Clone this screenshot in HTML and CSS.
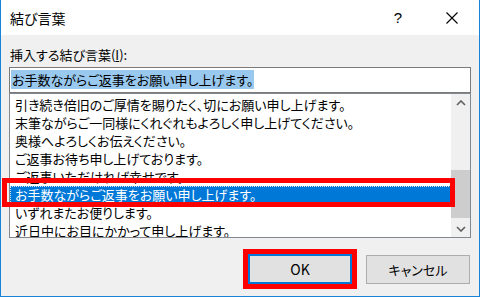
FILE: index.html
```html
<!DOCTYPE html>
<html>
	<head>
		<meta charset="utf-8">
		<title>結び言葉</title>
		<link rel="stylesheet" href="styles.css">
	</head>
	<body>
		<div class="dialog">
			<div class="titlebar">
				<span class="title">結び言葉</span>
				<span class="help">?</span>
				<span class="close">
					<svg width="12" height="12" viewBox="0 0 12 12">
						<path d="M0.5 0.5 L11.5 11.5 M11.5 0.5 L0.5 11.5" stroke="#000" stroke-width="1.1" fill="none"/>
					</svg>
				</span>
			</div>
			<div class="content">
				<div class="label">挿入する結び言葉(<u>I</u>):</div>
				<div class="textbox"><span class="sel">お手数ながらご返事をお願い申し上げます。</span></div>
				<div class="listbox">
					<ul class="items">
						<li>引き続き倍旧のご厚情を賜りたく、切にお願い申し上げます。</li>
						<li>末筆ながらご一同様にくれぐれもよろしく申し上げてください。</li>
						<li>奥様へよろしくお伝えください。</li>
						<li>ご返事お待ち申し上げております。</li>
						<li>ご返事いただければ幸せです。</li>
						<li class="selected">お手数ながらご返事をお願い申し上げます。</li>
						<li>いずれまたお便りします。</li>
						<li>近日中にお目にかかって申し上げます。</li>
					</ul>
					<div class="scrollbar">
						<div class="arrow">
							<svg width="10" height="6" viewBox="0 0 10 6">
								<path d="M1 5 L5 1 L9 5" stroke="#606060" stroke-width="1.6" fill="none"/>
							</svg>
						</div>
						<div class="track">
							<div class="thumb"></div>
						</div>
						<div class="arrow">
							<svg width="10" height="6" viewBox="0 0 10 6">
								<path d="M1 1 L5 5 L9 1" stroke="#606060" stroke-width="1.6" fill="none"/>
							</svg>
						</div>
					</div>
				</div>
				<div class="buttons">
					<span class="button default">OK</span>
					<span class="button">キャンセル</span>
				</div>
			</div>
			<div class="mark"></div>
		</div>
	</body>
</html>
```

FILE: styles.css
```css
html, body {
	margin: 0;
	width: 480px;
	height: 297px;
	overflow: hidden;
}
body {
	font-family: "Noto Sans CJK JP", "Liberation Sans", sans-serif;
	font-size: 13px;
	font-feature-settings: "palt";
	color: #000;
	background-color: #f0f0f0;
}
.dialog {
	position: relative;
	box-sizing: border-box;
	height: 297px;
	border-left: solid 1px #1883d7;
	border-right: solid 1px #1883d7;
	border-bottom: solid 1px #1883d7;
}
.titlebar {
	display: flex;
	align-items: center;
	height: 35px;
	background-color: #fff;
}
.title {
	flex: 1;
	padding-left: 9px;
	font-size: 14px;
}
.help, .close {
	display: flex;
	justify-content: center;
	align-items: center;
	width: 46px;
}
.help {
	font-family: "Liberation Sans", sans-serif;
	font-size: 15px;
	margin-right: 8px;
}
.close {
	margin-right: 4px;
}
.content {
	padding: 0 8px;
}
.label {
	margin-top: 11px;
	line-height: 18px;
	padding-left: 1px;
}
.textbox {
	box-sizing: border-box;
	height: 26px;
	margin-top: 3px;
	padding: 2px 1px;
	background-color: #fff;
	border: solid 1px #7a7a7a;
	line-height: 19px;
}
.sel {
	display: inline-block;
	background-color: #99c9ef;
	padding: 0 1px;
}
.listbox {
	display: flex;
	box-sizing: border-box;
	height: 145px;
	background-color: #fff;
	border: solid 1px #828790;
}
.items {
	flex: 1;
	margin: 0;
	padding: 2px 0 0 0;
	list-style: none;
	overflow: hidden;
}
.items li {
	height: 18px;
	line-height: 18px;
	padding-left: 5px;
	white-space: nowrap;
}
.items li.selected {
	background-color: #0078d7;
	color: #fff;
	outline: dotted 1px #cfe6f8;
	outline-offset: -1px;
}
.scrollbar {
	display: flex;
	flex-direction: column;
	width: 19px;
	background-color: #f0f0f0;
}
.arrow {
	display: flex;
	justify-content: center;
	align-items: center;
	height: 17px;
}
.track {
	flex: 1;
}
.thumb {
	height: 48px;
	margin-top: 59px;
	background-color: #cdcdcd;
}
.buttons {
	display: flex;
	justify-content: flex-end;
	gap: 14px;
	margin-top: 17px;
	padding-right: 1px;
}
.button {
	display: flex;
	justify-content: center;
	align-items: center;
	box-sizing: border-box;
	width: 104px;
	height: 29px;
	background-color: #e1e1e1;
	border: solid 1px #adadad;
	font-family: "Noto Sans CJK JP", "Liberation Sans", sans-serif;
}
.button.default {
	height: 30px;
	margin-top: -1px;
	border: solid 2px #0078d7;
	outline: solid 5px #f00;
	outline-offset: 0;
	font-size: 14px;
}
.mark {
	position: absolute;
	left: 1px;
	top: 178px;
	width: 453px;
	height: 29px;
	box-sizing: border-box;
	border: solid 5px #f00;
}
```
